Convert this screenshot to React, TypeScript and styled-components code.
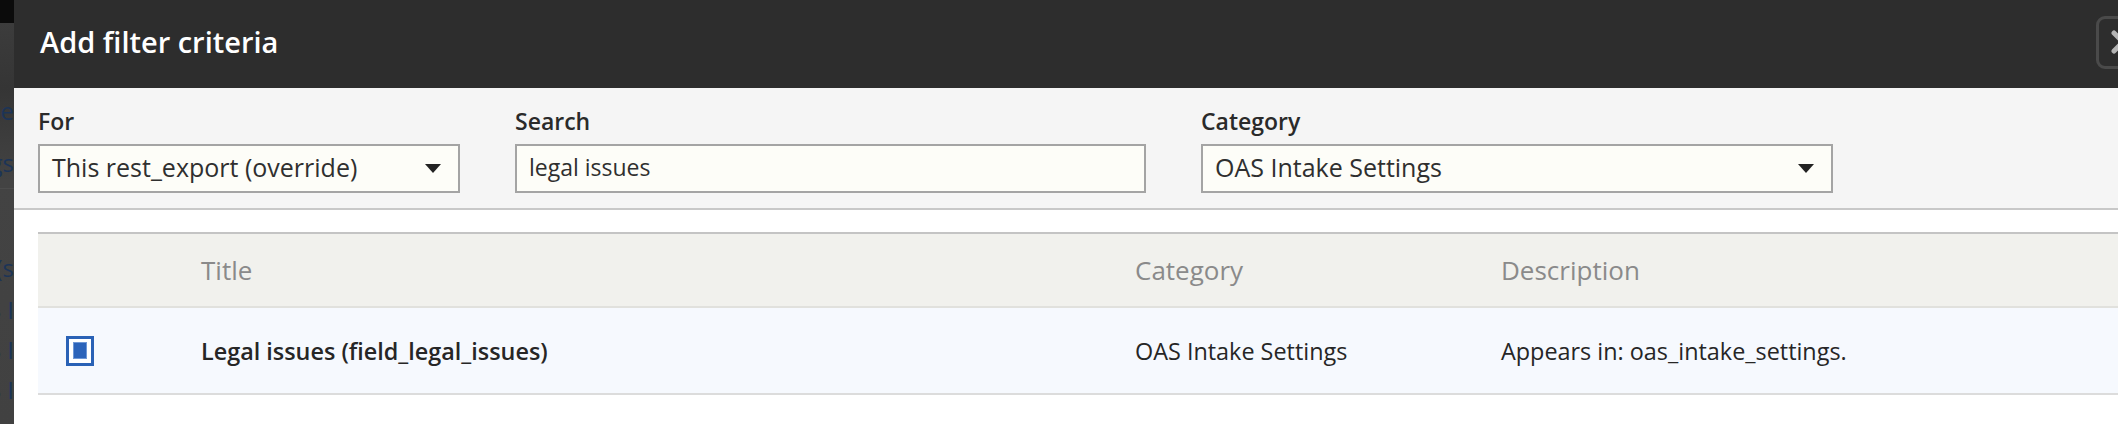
import React from "react";
import styled, { createGlobalStyle } from "styled-components";

const GlobalStyle = createGlobalStyle`
  html, body {
    margin: 0;
    padding: 0;
    width: 2118px;
    height: 424px;
    overflow: hidden;
    background: #ffffff;
  }
  * {
    box-sizing: border-box;
  }
`;

const FONT = `"Open Sans", "Noto Sans", "Liberation Sans", sans-serif`;

const Screen = styled.div`
  display: flex;
  width: 2118px;
  height: 424px;
  overflow: hidden;
  font-family: ${FONT};
`;

// bit of the page peeking out behind the overlay
const Backdrop = styled.div`
  width: 14px;
  flex: none;
  display: flex;
  flex-direction: column;
  align-items: flex-end;
  overflow: hidden;
  background: linear-gradient(
    to bottom,
    #0b0b0b 0,
    #0b0b0b 23px,
    #3c3c3c 23px,
    #353535 88px,
    #434343 180px,
    #414141 424px
  );
`;

const PeekText = styled.div<{ $top: number }>`
  margin-top: ${(p) => p.$top}px;
  height: 30px;
  line-height: 30px;
  font-size: 24px;
  white-space: nowrap;
  color: #1c3457;
`;

const PeekRule = styled.div`
  margin-top: 10px;
  width: 14px;
  height: 1px;
  background: #4c4c4c;
  flex: none;
`;

const Dialog = styled.div`
  flex: 1;
  display: flex;
  flex-direction: column;
  min-width: 0;
  background: #ffffff;
`;

const TitleBar = styled.div`
  height: 88px;
  flex: none;
  display: flex;
  align-items: center;
  padding-left: 26px;
  background: #2d2d2d;
`;

const Title = styled.h1`
  margin: 0;
  margin-top: -6px;
  font-size: 29px;
  font-weight: 600;
  color: #ffffff;
`;

const CloseButton = styled.button`
  margin-left: auto;
  margin-right: -32px;
  margin-top: -4px;
  width: 54px;
  height: 53px;
  border: 3px solid #4a4a4a;
  border-radius: 9px;
  background: transparent;
  display: flex;
  align-items: center;
  justify-content: center;
  padding: 0;
`;

const Filters = styled.div`
  flex: none;
  display: flex;
  gap: 55px;
  padding: 18px 0 15px 24px;
  background: #f5f5f5;
  border-bottom: 2px solid #c8c8c8;
`;

const Field = styled.div<{ $width: number }>`
  width: ${(p) => p.$width}px;
  display: flex;
  flex-direction: column;
`;

const Label = styled.label`
  font-size: 23px;
  font-weight: 600;
  line-height: 30px;
  color: #2a2a2a;
  margin-bottom: 8px;
`;

const Control = styled.div<{ $size?: number }>`
  height: 49px;
  display: flex;
  align-items: center;
  padding: 0 17px 4px 12px;
  border: 2px solid #a4a4a4;
  background: #fdfdf8;
  font-size: ${(p) => p.$size ?? 25}px;
  color: #2f2f2f;
  white-space: nowrap;
`;

const Arrow = styled.span`
  margin-left: auto;
  margin-top: 4px;
  width: 0;
  height: 0;
  border-left: 8px solid transparent;
  border-right: 8px solid transparent;
  border-top: 9px solid #222;
`;

const TableWrap = styled.div`
  margin: 22px 0 0 24px;
`;

const Grid = styled.div<{ $head?: boolean }>`
  display: grid;
  grid-template-columns: 163px 934px 366px 1fr;
  align-items: center;
  height: ${(p) => (p.$head ? 74 : 89)}px;
  background: ${(p) => (p.$head ? "#f1f1ed" : "#f6f9fe")};
  border-top: 2px solid ${(p) => (p.$head ? "#c4c4c4" : "#e1e1dd")};
  border-bottom: ${(p) => (p.$head ? "0" : "2px solid #dcdcdc")};
`;

const HeadCell = styled.div`
  font-size: 26px;
  color: #8a8a8a;
  white-space: nowrap;
`;

const Cell = styled.div<{ $bold?: boolean }>`
  font-size: 23.4px;
  font-weight: ${(p) => (p.$bold ? 600 : 400)};
  color: #262626;
  white-space: nowrap;
`;

const CheckCell = styled.div`
  padding-left: 28px;
  display: flex;
  align-items: center;
`;

const Check = styled.div`
  width: 28px;
  height: 30px;
  border: 3px solid #2a62b6;
  background: #ffffff;
  display: flex;
  align-items: center;
  justify-content: center;

  &::after {
    content: "";
    width: 14px;
    height: 17px;
    background: #2c64ba;
    box-shadow: inset 0 0 0 1px #6f98d6;
  }
`;

export default function App() {
  return (
    <>
      <GlobalStyle />
      <Screen>
        <Backdrop>
          <PeekText $top={96}>Se</PeekText>
          <PeekText $top={22}>gs</PeekText>
          <PeekRule />
          <PeekText $top={64}>(s</PeekText>
          <PeekText $top={12}>OAS I</PeekText>
          <PeekText $top={10}>OAS I</PeekText>
          <PeekText $top={10}>OAS I</PeekText>
        </Backdrop>
        <Dialog>
          <TitleBar>
            <Title>Add filter criteria</Title>
            <CloseButton aria-label="Close">
              <svg width="30" height="30" viewBox="0 0 30 30">
                <path
                  d="M6 6 L24 24 M24 6 L6 24"
                  stroke="#b4b4b4"
                  strokeWidth="5"
                  strokeLinecap="round"
                />
              </svg>
            </CloseButton>
          </TitleBar>
          <Filters>
            <Field $width={422}>
              <Label>For</Label>
              <Control>
                This rest_export (override)
                <Arrow />
              </Control>
            </Field>
            <Field $width={631}>
              <Label>Search</Label>
              <Control $size={23}>legal issues</Control>
            </Field>
            <Field $width={632}>
              <Label>Category</Label>
              <Control>
                OAS Intake Settings
                <Arrow />
              </Control>
            </Field>
          </Filters>
          <TableWrap>
            <Grid $head>
              <div />
              <HeadCell>Title</HeadCell>
              <HeadCell>Category</HeadCell>
              <HeadCell>Description</HeadCell>
            </Grid>
            <Grid>
              <CheckCell>
                <Check />
              </CheckCell>
              <Cell $bold>Legal issues (field_legal_issues)</Cell>
              <Cell>OAS Intake Settings</Cell>
              <Cell>Appears in: oas_intake_settings.</Cell>
            </Grid>
          </TableWrap>
        </Dialog>
      </Screen>
    </>
  );
}
